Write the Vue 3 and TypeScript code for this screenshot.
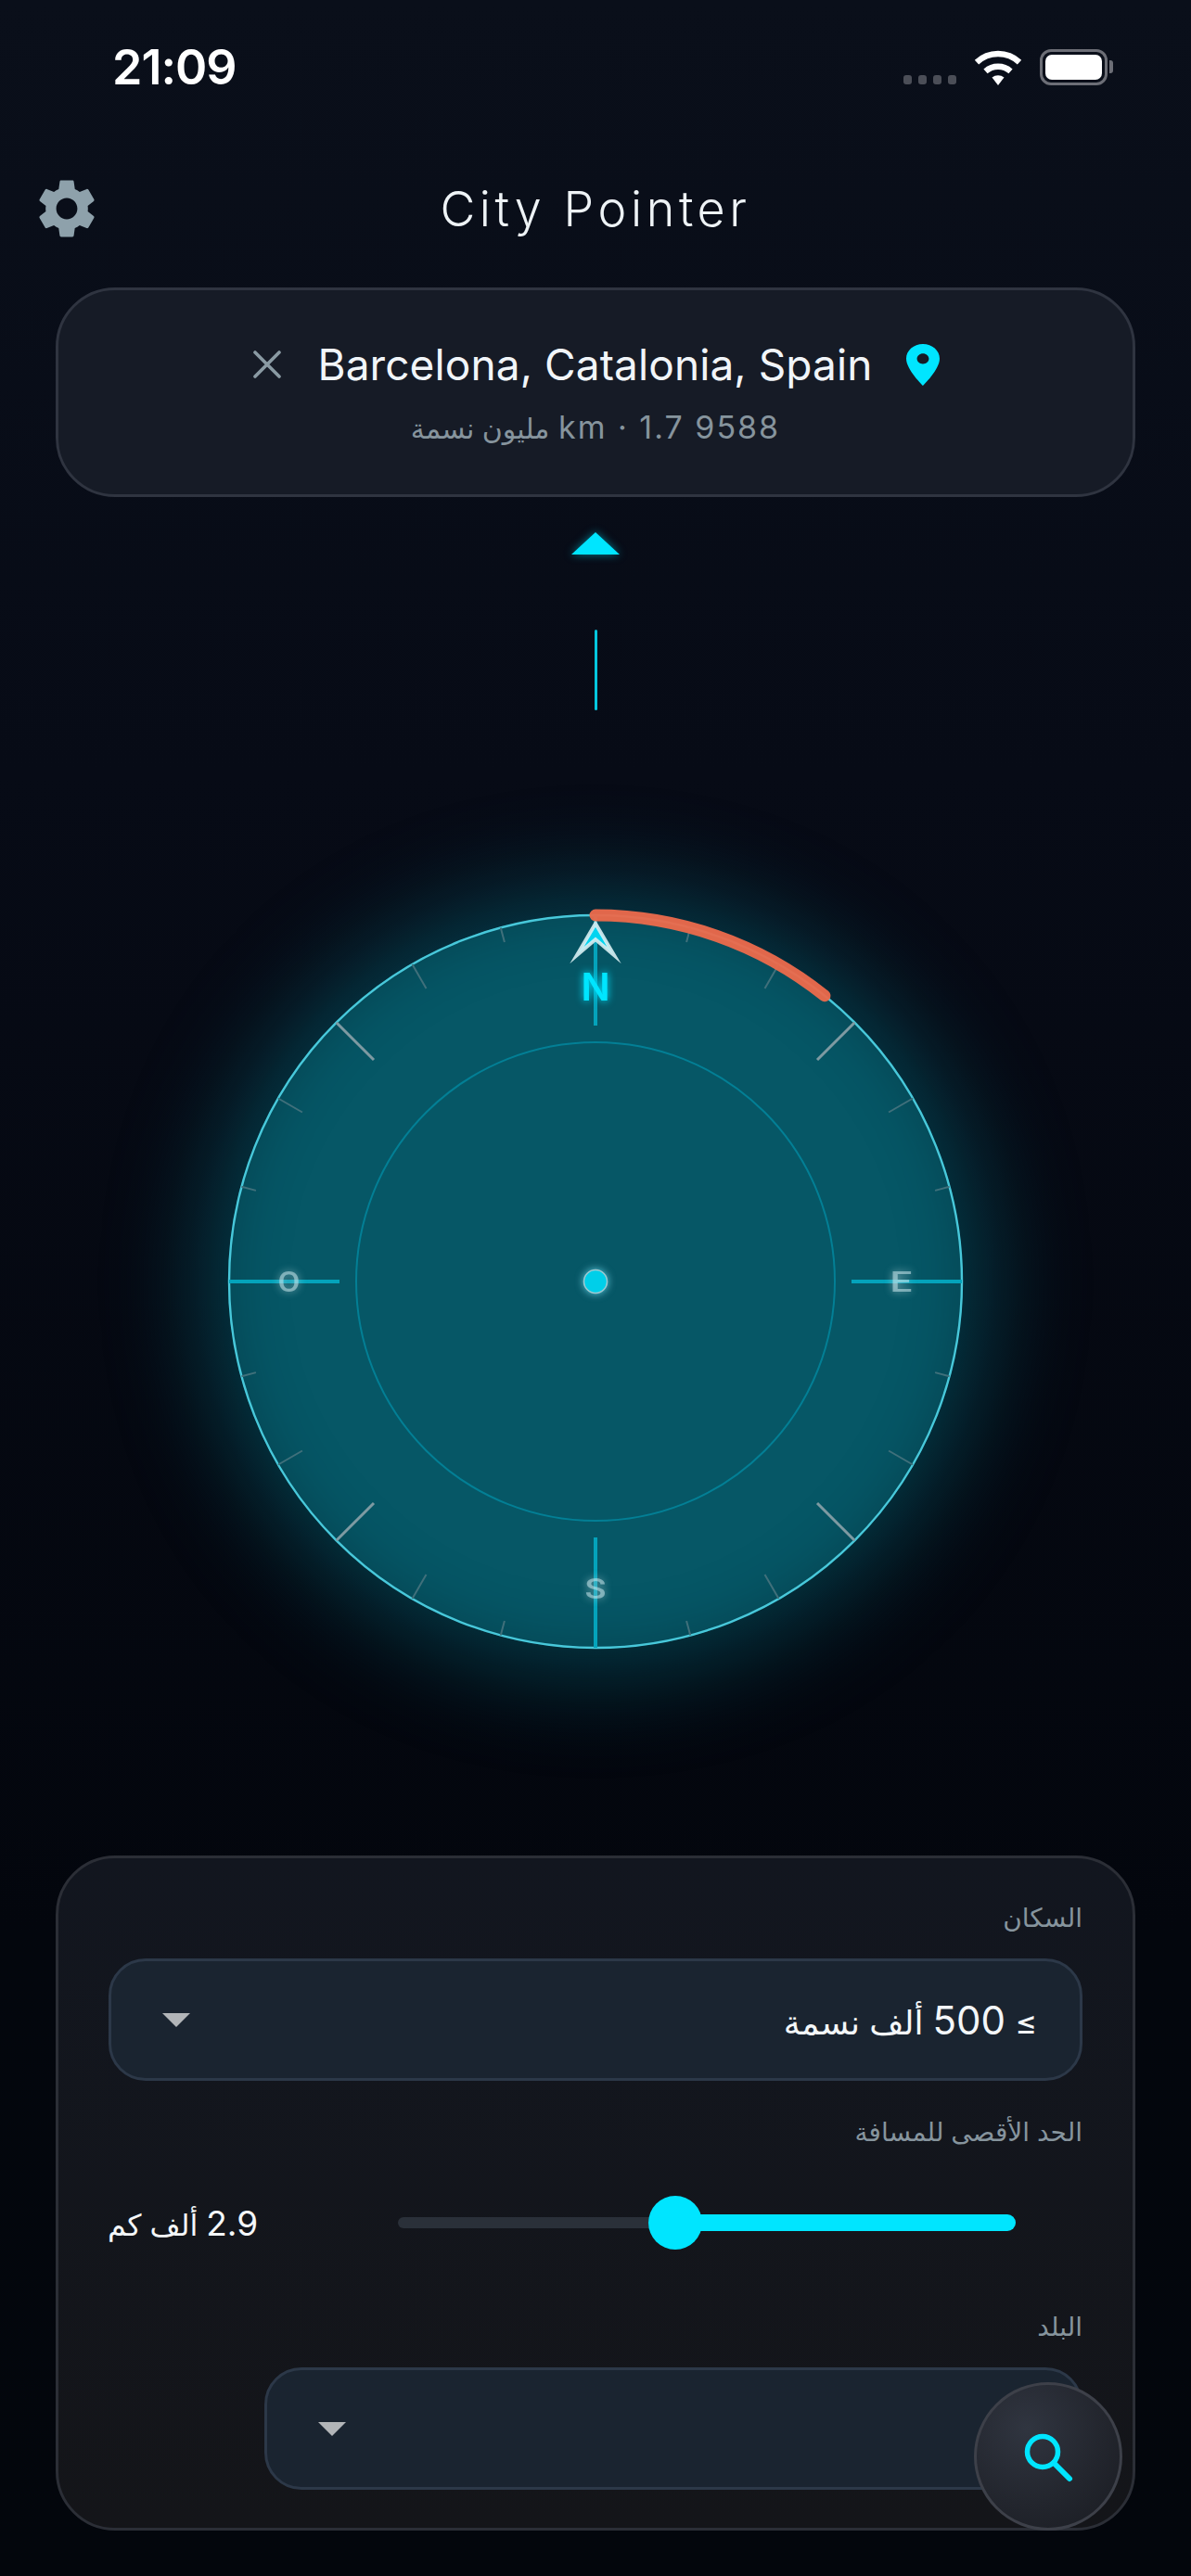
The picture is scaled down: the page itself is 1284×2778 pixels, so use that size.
<script setup lang="ts">
import { computed } from 'vue';

const CX = 396;
const CY = 396;
const R = 395;

const polar = (r: number, deg: number) => {
  const a = (deg * Math.PI) / 180;
  return { x: CX + r * Math.sin(a), y: CY - r * Math.cos(a) };
};

// every 15 degrees, the cardinal lines are drawn apart
const ticks = computed(() => {
  const list = [];
  for (let deg = 15; deg < 360; deg += 15) {
    if (deg % 90 === 0) continue;
    const major = deg % 45 === 0;
    const mid = deg % 30 === 0;
    const len = major ? 57 : mid ? 30 : 16;
    const a = polar(R, deg);
    const b = polar(R - len, deg);
    list.push({ deg, x1: a.x, y1: a.y, x2: b.x, y2: b.y, major, mid });
  }
  return list;
});

const arcEnd = polar(R, 38.7);
const arcPath = `M ${CX} ${CY - R} A ${R} ${R} 0 0 1 ${arcEnd.x} ${arcEnd.y}`;
</script>

<template>
  <div class="page">
    <div class="status">
      <span class="time">21:09</span>
      <div class="status-icons">
        <div class="signal"><i></i><i></i><i></i><i></i></div>
        <svg class="wifi" viewBox="0 0 52 38" width="52" height="38">
          <path d="M26 38 L19.5 29.6 a10.5 10.5 0 0 1 13 0 Z" fill="#fff" />
          <path d="M12.5 22.8 a20.5 20.5 0 0 1 27 0" fill="none" stroke="#fff" stroke-width="6.4" />
          <path d="M3 13.2 a33.5 33.5 0 0 1 46 0" fill="none" stroke="#fff" stroke-width="6.4" />
        </svg>
        <div class="battery"><div class="battery-fill"></div></div>
      </div>
    </div>

    <header class="topbar">
      <svg class="gear" viewBox="0 0 24 24" width="76" height="76">
        <path fill="#8ea1ab" d="M19.14 12.94c.04-.3.06-.61.06-.94 0-.32-.02-.64-.07-.94l2.03-1.58c.18-.14.23-.41.12-.61l-1.92-3.32c-.12-.22-.37-.29-.59-.22l-2.39.96c-.5-.38-1.03-.7-1.62-.94l-.36-2.54c-.04-.24-.24-.41-.48-.41h-3.84c-.24 0-.43.17-.47.41l-.36 2.54c-.59.24-1.13.57-1.62.94l-2.39-.96c-.22-.08-.47 0-.59.22L2.74 8.87c-.12.21-.08.47.12.61l2.03 1.58c-.05.3-.09.63-.09.94s.02.64.07.94l-2.03 1.58c-.18.14-.23.41-.12.61l1.92 3.32c.12.22.37.29.59.22l2.39-.96c.5.38 1.03.7 1.62.94l.36 2.54c.05.24.24.41.48.41h3.84c.24 0 .44-.17.47-.41l.36-2.54c.59-.24 1.13-.56 1.62-.94l2.39.96c.22.08.47 0 .59-.22l1.92-3.32c.12-.22.07-.47-.12-.61l-2.01-1.58zM12 15.6c-1.98 0-3.6-1.62-3.6-3.6s1.62-3.6 3.6-3.6 3.6 1.62 3.6 3.6-1.62 3.6-3.6 3.6z" />
      </svg>
      <h1 class="title">City Pointer</h1>
    </header>

    <section class="city-card">
      <div class="city-row">
        <svg class="close" viewBox="0 0 30 30" width="30" height="30">
          <path d="M2 2 L28 28 M28 2 L2 28" stroke="#8a9aa3" stroke-width="3.6" stroke-linecap="round" />
        </svg>
        <span class="city-name">Barcelona, Catalonia, Spain</span>
        <svg class="pin" viewBox="5 2 14 20" width="36" height="45" preserveAspectRatio="none">
          <path fill="#00e5ff" d="M12 2C8.13 2 5 5.13 5 9c0 5.25 7 13 7 13s7-7.75 7-13c0-3.87-3.13-7-7-7zm0 9.5c-1.38 0-2.5-1.12-2.5-2.5s1.12-2.5 2.5-2.5 2.5 1.12 2.5 2.5-1.12 2.5-2.5 2.5z" />
        </svg>
      </div>
      <div class="city-meta" dir="ltr"><span class="meta-ar">مليون نسمة</span> km · 1.7 9588</div>
    </section>

    <svg class="heading-mark" viewBox="0 0 52 24" width="52" height="24">
      <path d="M26 0 L52 24 H0 Z" fill="#00e5ff" />
    </svg>
    <div class="heading-line"></div>

    <div class="dial">
      <svg class="dial-svg" viewBox="0 0 792 792" width="792" height="792">
        <defs>
          <filter id="soft" x="-50%" y="-50%" width="200%" height="200%">
            <feGaussianBlur stdDeviation="4" result="b" />
            <feMerge><feMergeNode in="b" /><feMergeNode in="SourceGraphic" /></feMerge>
          </filter>
        </defs>

        <circle :cx="CX" :cy="CY" :r="R" fill="none" stroke="#48c8da" stroke-width="2.4" />
        <circle :cx="CX" :cy="CY" r="258" fill="none" stroke="#037f95" stroke-width="2" />

        <line
          v-for="t in ticks"
          :key="t.deg"
          :x1="t.x1"
          :y1="t.y1"
          :x2="t.x2"
          :y2="t.y2"
          :stroke="t.major ? '#7e9aa2' : '#40707b'"
          :stroke-width="t.major ? 3 : 2"
        />

        <g stroke="#04a3bb" stroke-width="4">
          <line x1="396" y1="1" x2="396" y2="120" />
          <line x1="396" y1="672" x2="396" y2="791" />
          <line x1="1" y1="396" x2="120" y2="396" />
          <line x1="672" y1="396" x2="791" y2="396" />
        </g>

        <g filter="url(#soft)">
          <text x="396" y="93" class="letter-n" text-anchor="middle">N</text>
          <text transform="translate(65.5 407) scale(1.12 1)" class="letter" text-anchor="middle">O</text>
          <text transform="translate(725.5 407) scale(1.36 1)" class="letter" text-anchor="middle">E</text>
          <text transform="translate(396 738) scale(1.22 1)" class="letter" text-anchor="middle">S</text>
        </g>

        <path d="M396 10 L416 44 L396 27 L376 44 Z" fill="#00d4f0" stroke="#d8eef2" stroke-opacity="0.9" stroke-width="4" stroke-miterlimit="8" />
        <path :d="arcPath" fill="none" stroke="#ea6a4c" stroke-opacity="0.96" stroke-width="13" stroke-linecap="round" />

        <circle cx="396" cy="396" r="12.5" fill="#00cfe9" stroke="#9fc9d1" stroke-width="1.5" filter="url(#soft)" />
      </svg>
    </div>

    <section class="panel">
      <label class="field-label">السكان</label>
      <div class="select">
        <span class="select-value" dir="rtl">≥ <span class="num">500</span> ألف نسمة</span>
        <span class="caret"></span>
      </div>

      <label class="field-label field-gap">الحد الأقصى للمسافة</label>
      <div class="range-row">
        <span class="range-value" dir="rtl"><span class="num">2.9</span> ألف كم</span>
        <div class="range">
          <div class="range-rest"></div>
          <div class="range-thumb"></div>
          <div class="range-fill"></div>
        </div>
      </div>

      <label class="field-label country-label">البلد</label>
      <div class="select select-short">
        <span class="caret"></span>
      </div>

      <button class="fab">
        <svg viewBox="0 0 60 60" width="60" height="60">
          <circle cx="21" cy="21" r="16.5" fill="none" stroke="#00e5ff" stroke-width="5.5" />
          <path d="M33 33 L50 50" stroke="#00e5ff" stroke-width="6" stroke-linecap="round" />
        </svg>
      </button>
    </section>
  </div>
</template>

<style>
html,
body {
  margin: 0;
  background: #03060c;
}
</style>

<style scoped>
.page {
  position: relative;
  width: 1284px;
  height: 2778px;
  overflow: hidden;
  display: flex;
  flex-direction: column;
  align-items: center;
  background: linear-gradient(180deg, #0a0f1a 0%, #070b16 30%, #03060d 75%, #03060c 100%);
  font-family: Inter, "Noto Sans", "DejaVu Sans", sans-serif;
  color: #fff;
}

.status {
  width: 100%;
  height: 170px;
  box-sizing: border-box;
  padding: 45px 90px 0 121px;
  display: flex;
  justify-content: space-between;
  align-items: flex-start;
}

.time {
  font-size: 52px;
  font-weight: 600;
  line-height: 56px;
  letter-spacing: -1px;
}

.status-icons {
  display: flex;
  align-items: flex-end;
  gap: 19px;
  margin-top: 8px;
}

.signal {
  display: flex;
  gap: 7px;
  margin-bottom: 1px;
}

.signal i {
  width: 9px;
  height: 10px;
  border-radius: 3px;
  background: #4b4e57;
}

.battery {
  position: relative;
  width: 73px;
  height: 39px;
  box-sizing: border-box;
  border: 3px solid #6c6e76;
  border-radius: 12px;
  padding: 3px;
}

.battery::after {
  content: "";
  position: absolute;
  right: -9px;
  top: 9px;
  width: 4px;
  height: 14px;
  border-radius: 0 3px 3px 0;
  background: #6c6e76;
}

.battery-fill {
  width: 100%;
  height: 100%;
  background: #fff;
  border-radius: 7px;
}

.topbar {
  position: relative;
  width: 100%;
  height: 110px;
  display: flex;
  align-items: center;
  justify-content: center;
  margin-bottom: 30px;
}

.gear {
  position: absolute;
  left: 34px;
  top: 17px;
}

.title {
  margin: 0;
  font-size: 52px;
  font-weight: 300;
  letter-spacing: 4.6px;
  color: #eef3f6;
}

.city-card {
  width: 1164px;
  height: 226px;
  box-sizing: border-box;
  border: 3px solid #2f3440;
  border-radius: 64px;
  background: #161b26;
  display: flex;
  flex-direction: column;
  align-items: center;
  padding-top: 50px;
}

.city-row {
  display: flex;
  align-items: center;
  gap: 36px;
  height: 60px;
  margin-left: 2px;
}

.close {
  margin-right: 3px;
}

.city-name {
  font-size: 46px;
  font-weight: 400;
  letter-spacing: 0.1px;
  color: #f1f5f9;
  line-height: 60px;
}

.city-meta {
  margin-top: 16px;
  font-size: 34px;
  line-height: 44px;
  letter-spacing: 2px;
  color: #86949d;
}

.meta-ar {
  font-size: 30px;
  letter-spacing: 0;
}

.heading-mark {
  margin-top: 38px;
  filter: drop-shadow(0 0 5px rgba(0, 229, 255, 0.5));
}

.heading-line {
  width: 3px;
  height: 87px;
  margin-top: 81px;
  border-radius: 2px;
  background: #04c7de;
}

.dial {
  position: relative;
  width: 792px;
  height: 792px;
  margin-top: 220px;
  border-radius: 50%;
  background: #065766;
  box-shadow: 0 0 110px 22px rgba(0, 160, 185, 0.36), inset 0 0 60px rgba(2, 30, 40, 0.35);
}

.dial-svg {
  display: block;
  overflow: visible;
}

.letter-n {
  font-family: Inter, sans-serif;
  font-size: 41px;
  font-weight: 600;
  fill: #00e5ff;
}

.letter {
  font-family: Roboto, sans-serif;
  font-size: 31px;
  font-weight: 500;
  fill: rgba(200, 230, 235, 0.55);
}

.panel {
  position: relative;
  width: 1164px;
  height: 728px;
  box-sizing: border-box;
  margin-top: 223px;
  padding: 42px 54px 0;
  border: 3px solid #2b2e36;
  border-radius: 64px;
  background: linear-gradient(180deg, #12161f 0%, #141519 100%);
  display: flex;
  flex-direction: column;
  align-items: flex-end;
}

.field-label {
  font-size: 28px;
  line-height: 44px;
  color: #86949d;
}

.select {
  width: 100%;
  height: 132px;
  flex: none;
  box-sizing: border-box;
  margin-top: 22px;
  padding: 0 46px 0 55px;
  border: 3px solid #2c3848;
  border-radius: 40px;
  background: #1a2430;
  display: flex;
  flex-direction: row-reverse;
  align-items: center;
  justify-content: space-between;
}

.select-short {
  width: 882px;
}

.select-value {
  font-size: 36px;
  color: #f4f7f9;
}

.select-value .num {
  font-size: 42px;
}

.caret {
  width: 0;
  height: 0;
  margin-right: auto;
  border-left: 15px solid transparent;
  border-right: 15px solid transparent;
  border-top: 15px solid #b2b5b8;
}

.field-gap {
  margin-top: 33px;
}

.range-row {
  width: 100%;
  height: 60px;
  margin-top: 46px;
  flex: none;
  display: flex;
  align-items: center;
  justify-content: space-between;
}

.range-value {
  font-size: 32px;
  color: #f4f7f9;
  margin-left: -1px;
}

.range-value .num {
  font-size: 37px;
}

.range {
  width: 666px;
  margin-right: 72px;
  display: flex;
  align-items: center;
}

.range-rest {
  width: 280px;
  height: 12px;
  margin-right: -10px;
  border-radius: 6px 0 0 6px;
  background: #2a3039;
}

.range-thumb {
  position: relative;
  width: 58px;
  height: 58px;
  flex: none;
  border-radius: 50%;
  background: #00e5ff;
}

.range-fill {
  flex: 1;
  height: 18px;
  margin-left: -10px;
  border-radius: 0 9px 9px 0;
  background: #00e5ff;
}

.country-label {
  margin-top: 60px;
}

.fab {
  position: absolute;
  right: 11px;
  bottom: -3px;
  width: 160px;
  height: 160px;
  box-sizing: border-box;
  padding: 8px 0 0 6px;
  border: 3px solid #3d4049;
  border-radius: 50%;
  background: radial-gradient(circle at 35% 30%, #303540 0%, #23262e 55%, #191b21 100%);
  display: flex;
  align-items: center;
  justify-content: center;
}
</style>
